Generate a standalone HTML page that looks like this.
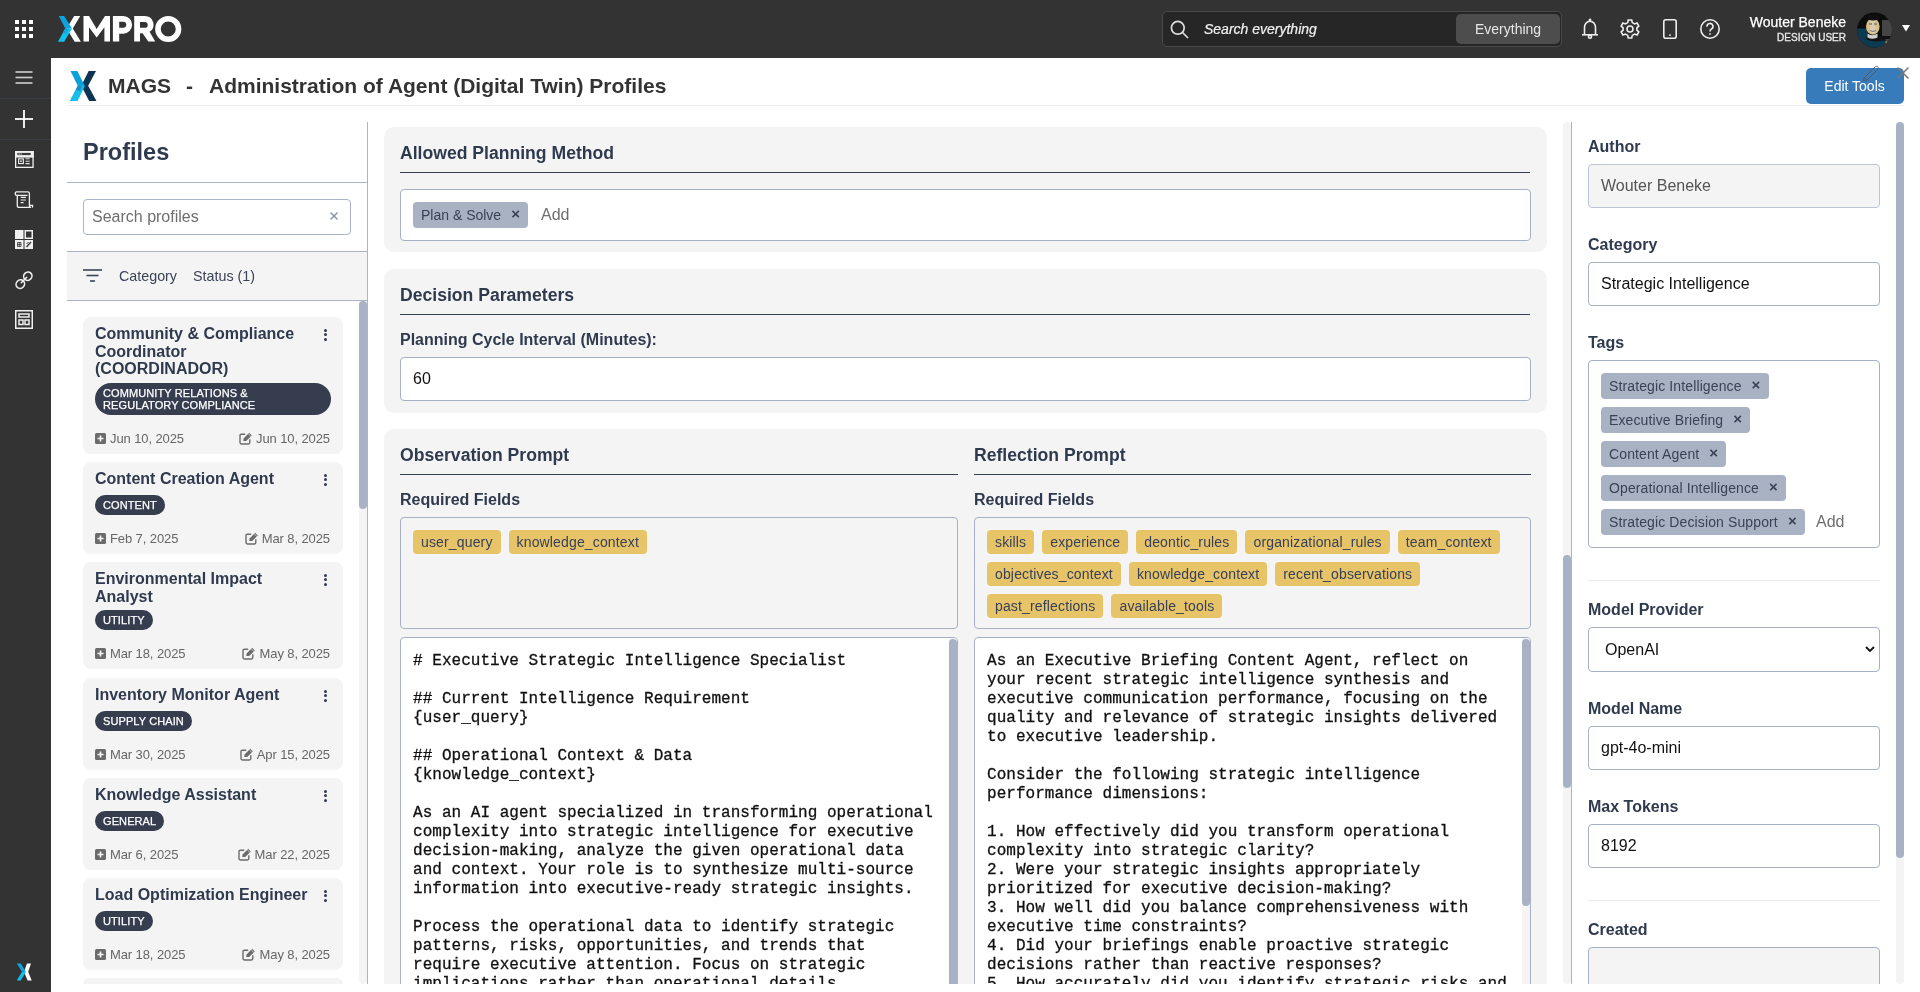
<!DOCTYPE html>
<html><head><meta charset="utf-8"><style>
*{box-sizing:border-box;margin:0;padding:0}
html,body{width:1920px;height:992px;overflow:hidden;background:#fff;-webkit-font-smoothing:antialiased;font-family:"Liberation Sans",sans-serif;color:#333}
.abs{position:absolute}
#top{position:absolute;left:0;top:0;width:1920px;height:58px;background:#333}
#side{position:absolute;left:0;top:58px;width:51px;height:934px;background:#333}
.sb-sep{position:absolute;left:0;width:51px;height:1px;background:#383c45}
#hdr-line{position:absolute;left:67px;top:105px;width:1836px;height:1px;background:#ececec}
.t{position:absolute;white-space:nowrap}
#root{position:absolute;left:0;top:0;width:1920px;height:992px;will-change:transform;background:#fff}
.card{position:absolute;left:83px;width:260px;background:#f4f4f4;border-radius:8px}
.ctitle{position:absolute;left:12px;font-size:16px;font-weight:bold;color:#2f3a4e;line-height:17.6px;white-space:nowrap}
.badge{position:absolute;left:12px;background:#363d4f;color:#fff;font-size:11px;letter-spacing:0.1px;-webkit-text-stroke:0.25px #fff;line-height:12px;border-radius:10px;padding:4px 8px;white-space:nowrap}
.date{position:absolute;font-size:13px;color:#666;line-height:14px;white-space:nowrap;letter-spacing:-0.1px}
.kebab{position:absolute;left:241px;width:4px}
.kebab i{display:block;width:3px;height:3px;border-radius:50%;background:#2f3a4e;margin-bottom:1.2px}
.sec{position:absolute;left:384px;width:1163px;background:#f4f4f4;border-radius:10px}
.h3{position:absolute;font-size:17.6px;font-weight:bold;color:#2f3a4e;line-height:20px;white-space:nowrap}
.uline{position:absolute;height:1.4px;background:#364052}
.lbl{position:absolute;font-size:16px;font-weight:bold;color:#2f3a4e;line-height:18px;white-space:nowrap}
.inp{position:absolute;background:#fff;border:1px solid #a7b1c6;border-radius:4px}
.chip{position:absolute;background:#a9b2c3;color:#3a4356;font-size:14px;line-height:16px;border-radius:4px;white-space:nowrap;height:26px;padding:5px 8px}
.ychip{display:inline-block;background:#e8c468;color:#36405a;font-size:14px;letter-spacing:0.15px;line-height:16px;border-radius:4px;white-space:nowrap;height:24px;padding:4px 8px;margin:0 8px 8px 0;vertical-align:top}
.mono{position:absolute;font-family:"Liberation Mono",monospace;font-size:16px;line-height:19px;color:#111;white-space:pre;letter-spacing:0.025px;-webkit-text-stroke:0.3px #111}
.rl{position:absolute;left:1588px;font-size:16px;font-weight:bold;color:#2f3a4e;line-height:18px;white-space:nowrap}
.ri{position:absolute;left:1588px;width:292px;height:44px;background:#fff;border:1px solid #a7b1c6;border-radius:4px}
.rv{position:absolute;left:1601px;font-size:16px;color:#111;line-height:18px;white-space:nowrap}
.tchip{position:absolute;left:1601px;height:26px;background:#a9b2c3;color:#3a4356;font-size:14px;letter-spacing:0.12px;line-height:16px;border-radius:4px;white-space:nowrap;padding:5px 8px}
</style></head><body><div id="root"><!-- TOP BAR -->
<div id="top">
  <svg class="abs" style="left:15px;top:20px" width="18" height="18" viewBox="0 0 18 18" fill="#fff">
    <rect x="0" y="0" width="4" height="4"/><rect x="7" y="0" width="4" height="4"/><rect x="14" y="0" width="4" height="4"/>
    <rect x="0" y="7" width="4" height="4"/><rect x="7" y="7" width="4" height="4"/><rect x="14" y="7" width="4" height="4"/>
    <rect x="0" y="14" width="4" height="4"/><rect x="7" y="14" width="4" height="4"/><rect x="14" y="14" width="4" height="4"/>
  </svg>
  <!-- XMPRO logo -->
  <svg class="abs" style="left:55px;top:12px" width="130" height="34" viewBox="55 12 130 34">
    <polygon points="74.2,16.1 80.2,16.1 72.8,28.6 80.9,41.7 74.7,41.7 66.6,28.6" fill="#fff"/>
    <polygon points="58.8,16.1 64.1,16.1 72,28.6 65.3,28.6" fill="#0ea3dd"/>
    <polygon points="65.3,28.6 72,28.6 64.1,41.7 57.9,41.7" fill="#13c2ec"/>
    <polygon points="65.3,28.6 69.5,28.6 66.2,34 62.5,33" fill="#12a8df"/>
    <polygon points="83.5,41.4 83.5,16 89,16 96.7,28.9 105,16 110,16 110,41.4 104.4,41.4 104.4,27.2 96.7,37.6 89,27.2 89,41.4" fill="#fff"/>
    <path fill="#fff" fill-rule="evenodd" d="M112.9,41.4 V16 H123.25 A8.85,8.85 0 0 1 123.25,33.7 H119.2 V41.4 Z M119.2,21.8 H123.25 A3,3 0 0 1 123.25,27.8 H119.2 Z"/>
    <path fill="#fff" fill-rule="evenodd" d="M134.2,41.4 V16 H144.9 A8.6,8.6 0 0 1 149.6,31.8 L155.2,41.4 H148.3 L142.6,33.2 H140 V41.4 Z M140,22 H144.8 A2.9,2.9 0 0 1 144.8,27.8 H140 Z"/>
    <circle cx="168.25" cy="29" r="10.3" stroke="#fff" stroke-width="5.6" fill="none"/>
  </svg>
  <!-- search -->
  <div class="abs" style="left:1162px;top:11px;width:400px;height:36px;background:#262626;border:1px solid #4a4a4a;border-radius:5px"></div>
  <svg class="abs" style="left:1170px;top:20px" width="19" height="19" viewBox="0 0 19 19" fill="none" stroke="#ddd" stroke-width="1.7">
    <circle cx="7.8" cy="7.8" r="6.4"/><line x1="12.5" y1="12.5" x2="18" y2="18"/>
  </svg>
  <div class="t" style="left:1204px;top:20px;font-size:14px;font-style:italic;color:#f2f2f2;line-height:18px;-webkit-text-stroke:0.2px #f2f2f2">Search everything</div>
  <div class="abs" style="left:1456px;top:14px;width:104px;height:30px;background:#4d4d4d;border-radius:5px"></div>
  <div class="t" style="left:1475px;top:20px;font-size:14px;color:#e6e6e6;line-height:18px">Everything</div>
  <!-- icons -->
  <svg class="abs" style="left:1580px;top:18px" width="20" height="22" viewBox="0 0 20 22" fill="none" stroke="#eee" stroke-width="1.6">
    <path d="M4.5,16.5 V9.5 A5.5,6.3 0 0 1 15.5,9.5 V16.5"/><line x1="2" y1="16.8" x2="18" y2="16.8"/><circle cx="10" cy="18.8" r="1.5"/><circle cx="10" cy="2" r="0.6"/>
  </svg>
  <svg class="abs" style="left:1620px;top:19px" width="20" height="20" viewBox="0 0 20 20" fill="none" stroke="#eee" stroke-width="1.6">
    <path d="M8.3,1 H11.7 L12.3,3.6 L14.6,4.9 L17.1,4 L18.8,7 L16.9,8.8 V11.2 L18.8,13 L17.1,16 L14.6,15.1 L12.3,16.4 L11.7,19 H8.3 L7.7,16.4 L5.4,15.1 L2.9,16 L1.2,13 L3.1,11.2 V8.8 L1.2,7 L2.9,4 L5.4,4.9 L7.7,3.6 Z"/>
    <circle cx="10" cy="10" r="3"/>
  </svg>
  <svg class="abs" style="left:1663px;top:19px" width="14" height="20" viewBox="0 0 14 20" fill="none" stroke="#eee" stroke-width="1.6">
    <rect x="0.8" y="0.8" width="12.4" height="18.4" rx="2"/><line x1="6" y1="16.2" x2="8" y2="16.2" stroke-width="1.2"/>
  </svg>
  <svg class="abs" style="left:1700px;top:19px" width="20" height="20" viewBox="0 0 20 20" fill="none" stroke="#eee" stroke-width="1.6">
    <circle cx="10" cy="10" r="9.2"/><path d="M7,7.6 A3,3 0 1 1 11.2,10.2 C10.3,10.7 10,11.2 10,12.5"/><line x1="10" y1="14.2" x2="10" y2="15.8"/>
  </svg>
  <div class="t" style="right:74px;top:14px;font-size:14px;color:#fff;line-height:16px;text-align:right;-webkit-text-stroke:0.25px #fff">Wouter Beneke</div>
  <div class="t" style="right:74px;top:32px;font-size:10px;font-weight:normal;color:#e6e6e6;-webkit-text-stroke:0.35px #e6e6e6;line-height:12px;text-align:right">DESIGN USER</div>
  <!-- avatar -->
  <svg class="abs" style="left:1856px;top:12px" width="37" height="36" viewBox="0 0 37 36">
    <defs><clipPath id="av"><circle cx="18.5" cy="18" r="17.5"/></clipPath></defs>
    <g clip-path="url(#av)">
      <rect width="37" height="36" fill="#0c0c0c"/>
      <rect x="26" y="8" width="11" height="28" fill="#454545"/>
      <path d="M0,16.5 H11 L12,25 L27,25 L29,27 L33,33 V36 H0 Z" fill="#0b3a51"/>
      <path d="M10,25 L27,24.5 L30,28.5 L19,29.5 L11,28 Z" fill="#141414"/>
      <path d="M11.5,21.5 Q16,25 21.5,21.5 L21.5,25.5 Q16,28 11.5,25.5 Z" fill="#cfcfcf"/>
      <ellipse cx="16.8" cy="14.5" rx="6.8" ry="8.3" fill="#dcbf7e"/>
      <path d="M14,8 Q17,6 19,9 L20,20 Q17,23 14,20 Z" fill="#d6d6d6" opacity="0.6"/>
      <path d="M13,12 H16 M18,12 H21" stroke="#555" stroke-width="1"/>
      <path d="M14,18.5 Q17,20.5 20,18.5" stroke="#777" stroke-width="1" fill="none"/>
      <ellipse cx="17" cy="5.8" rx="6.5" ry="2.8" fill="#111"/>
      <rect x="25.5" y="24" width="9" height="3" fill="#111"/>
      <rect x="29.5" y="29.5" width="2" height="2" fill="#c9a860"/>
    </g>
  </svg>
  <svg class="abs" style="left:1902px;top:25px" width="8" height="7" viewBox="0 0 8 7"><polygon points="0,0 8,0 4,6.5" fill="#fff"/></svg>
</div>
<!-- SIDEBAR -->
<div id="side">
  <svg class="abs" style="left:15px;top:13px" width="18" height="13" viewBox="0 0 18 13" stroke="#cfcfcf" stroke-width="1.6">
    <line x1="0.5" y1="1" x2="17.5" y2="1"/><line x1="0.5" y1="6.5" x2="17.5" y2="6.5"/><line x1="0.5" y1="12" x2="17.5" y2="12"/>
  </svg>
  <div class="sb-sep" style="top:40px"></div>
  <svg class="abs" style="left:15px;top:52px" width="18" height="18" viewBox="0 0 18 18" stroke="#fff" stroke-width="1.8">
    <line x1="9" y1="0" x2="9" y2="18"/><line x1="0" y1="9" x2="18" y2="9"/>
  </svg>
  <div class="sb-sep" style="top:81px"></div>
  <!-- icon1: window -->
  <svg class="abs" style="left:14px;top:93px" width="20" height="18" viewBox="0 0 20 18">
    <rect x="1.65" y="0.65" width="17.4" height="15.7" fill="none" stroke="#f0f0f0" stroke-width="1.3"/>
    <rect x="1" y="0" width="18.7" height="6.6" fill="#f0f0f0"/>
    <rect x="3.2" y="1.9" width="13.5" height="2.2" fill="#3a3a3a"/>
    <rect x="3.6" y="2.4" width="1" height="1.2" fill="#ccc"/><rect x="5.2" y="2.4" width="1" height="1.2" fill="#ccc"/><rect x="6.8" y="2.4" width="1" height="1.2" fill="#ccc"/>
    <rect x="4.1" y="7.3" width="5.8" height="5.8" fill="#f0f0f0"/>
    <rect x="5.2" y="8.4" width="3.6" height="3.6" fill="#333"/>
    <circle cx="7" cy="10.2" r="0.9" fill="#f0f0f0"/>
    <path d="M11.5,7.7 H15.7 M11.5,10.2 H15.7 M11.5,12.6 H15.7" stroke="#e0e0e0" stroke-width="1.1"/>
  </svg>
  <!-- icon2: scroll -->
  <svg class="abs" style="left:14px;top:133px" width="20" height="18" viewBox="0 0 20 18" fill="none" stroke="#f0f0f0" stroke-width="1.3">
    <path d="M2.6,4.4 Q1.3,4.4 1.3,2.4 Q1.3,0.9 2.6,0.9 H13.8 Q15.4,0.9 15.4,2.6 V14.8 Q15.4,16.4 17,16.4 H5 Q3.3,16.4 3.3,14.8 V4.4 Z"/>
    <path d="M3.3,4.4 H13.5 M15.4,14.4 H18.6 V15.6 Q18.6,16.4 17.8,16.4" />
    <path d="M6.7,6.4 H11.9 M6.7,9 H11.9 M6.7,11.6 H9.6" stroke-width="1.1"/>
  </svg>
  <!-- icon3: grid -->
  <svg class="abs" style="left:15px;top:172px" width="18" height="19" viewBox="0 0 18 19">
    <rect x="0" y="0" width="8.5" height="9" fill="#f0f0f0"/>
    <rect x="10.25" y="0.75" width="7" height="7.5" fill="none" stroke="#f0f0f0" stroke-width="1.5"/>
    <rect x="0" y="10" width="8.5" height="9" fill="#f0f0f0"/>
    <rect x="9.5" y="10" width="8.5" height="9" fill="#f0f0f0"/>
    <path d="M2.5,12.5 H6 V16.5 H2.5 Z M4.25,12.5 V16.5 M2.5,14.5 H6" stroke="#333" stroke-width="0.8" fill="none"/>
    <line x1="11.5" y1="17" x2="16" y2="12" stroke="#333" stroke-width="1.2"/>
    <line x1="11.5" y1="14" x2="13.5" y2="12" stroke="#333" stroke-width="1"/>
  </svg>
  <!-- icon4: link -->
  <svg class="abs" style="left:15px;top:212px" width="18" height="20" viewBox="0 0 18 20" fill="none" stroke="#f0f0f0" stroke-width="1.6">
    <ellipse cx="12.8" cy="6.2" rx="4.3" ry="4.0" transform="rotate(-45 12.8 6.2)"/>
    <ellipse cx="5.3" cy="14.1" rx="4.4" ry="4.1" transform="rotate(-45 5.3 14.1)"/>
    <line x1="6.3" y1="12.7" x2="11.7" y2="7.3" stroke-linecap="round"/>
  </svg>
  <!-- icon5 -->
  <svg class="abs" style="left:15px;top:252px" width="18" height="19" viewBox="0 0 18 19" fill="none" stroke="#f0f0f0" stroke-width="1.5">
    <rect x="0.75" y="0.75" width="16.5" height="17.5"/>
    <rect x="4" y="4" width="10" height="3"/><rect x="4" y="10" width="4" height="4.5"/><rect x="10" y="10" width="4" height="4.5"/>
  </svg>
  <!-- bottom X -->
  <svg class="abs" style="left:16px;top:905px" width="17" height="18" viewBox="0 0 17 18">
    <polygon points="11,0.5 15,0.5 12.2,8.8 15.7,17.4 11.6,17.4 8,8.8" fill="#fff"/>
    <polygon points="0.8,0.5 4.7,0.5 10,8.8 6,8.8" fill="#10a5de"/>
    <polygon points="6,8.8 10,8.8 4.7,17.4 0.8,17.4" fill="#14c0ea"/>
  </svg>
</div>
<!-- HEADER -->
<svg class="abs" style="left:70px;top:71px" width="26.5" height="30" viewBox="0.5 0.5 27 31" preserveAspectRatio="none">
  <polygon points="19.5,0.5 27,0.5 19,15.8 27.5,31.5 20,31.5 12,15.8" fill="#0b3550"/>
  <polygon points="1,0.5 8,0.5 15.5,15.8 8,31.5 0.5,31.5 8.4,15.8" fill="#0aa1db"/>
  <polygon points="8.4,15.8 15.5,15.8 8,31.5 0.5,31.5" fill="#17c0ea"/>
  <polygon points="8.4,15.8 13,15.8 10.5,21.5 6.5,19.8" fill="#1a8fc8"/>
</svg>
<div class="t" style="left:108px;top:73.5px;font-size:21px;font-weight:bold;color:#333;line-height:24px">MAGS</div>
<div class="t" style="left:186px;top:73.5px;font-size:21px;font-weight:bold;color:#333;line-height:24px">-</div>
<div class="t" style="left:209px;top:73.5px;font-size:21px;font-weight:bold;color:#333;line-height:24px">Administration of Agent (Digital Twin) Profiles</div>
<div class="abs" style="left:1806px;top:68px;width:98px;height:36px;background:#377bbb;border-radius:5px"></div>
<div class="t" style="left:1824.3px;top:77px;font-size:14px;color:#fff;line-height:18px">Edit Tools</div>
<svg class="abs" style="left:1860px;top:63px" width="52" height="20" viewBox="0 0 52 20" fill="none">
  <path d="M4,15 L15.5,3.5 A1.8,1.8 0 0 1 18,6 L6.5,17.5 L3.6,18.1 Z M4.6,14.6 L6.9,16.9" stroke="#555" stroke-width="1" opacity="0.85"/>
  <path d="M37.5,4.5 L48.5,15.5 M48.5,4.5 L37.5,15.5" stroke="#777" stroke-width="1.5"/>
</svg>
<div id="hdr-line"></div>
<div class="t" style="left:83px;top:139px;font-size:23.5px;font-weight:bold;color:#2f3a4e;line-height:27px">Profiles</div><div class="abs" style="left:67px;top:182px;width:300px;height:1px;background:#a9b4c8"></div><div class="abs" style="left:83px;top:199px;width:268px;height:36px;border:1px solid #a9b4c8;border-radius:4px;background:#fff"></div><div class="t" style="left:92px;top:208px;font-size:16px;color:#6e6e6e;line-height:18px">Search profiles</div><svg class="abs" style="left:330px;top:212px" width="8" height="8" viewBox="0 0 8 8" stroke="#8a94a6" stroke-width="1.4"><line x1="0.5" y1="0.5" x2="7.5" y2="7.5"/><line x1="7.5" y1="0.5" x2="0.5" y2="7.5"/></svg><div class="abs" style="left:67px;top:251px;width:300px;height:50px;background:#f4f4f4;border-top:1px solid #a9b4c8;border-bottom:1px solid #a9b4c8"></div><svg class="abs" style="left:83px;top:269px" width="20" height="13" viewBox="0 0 20 13" stroke="#3a4356" stroke-width="1.6"><line x1="0" y1="1" x2="19" y2="1"/><line x1="3.5" y1="6.5" x2="15.5" y2="6.5"/><line x1="7" y1="12" x2="12" y2="12"/></svg><div class="t" style="left:119px;top:267.5px;font-size:14.3px;color:#3a4356;line-height:17px">Category</div><div class="t" style="left:193px;top:267.5px;font-size:14.3px;color:#3a4356;line-height:17px">Status (1)</div><div class="abs" style="left:359px;top:301px;width:8px;height:683px;background:#f4f4f4;border-radius:0 0 4px 4px"></div><div class="abs" style="left:359px;top:301px;width:8px;height:208px;background:#a8b2c4;border-radius:4px"></div><div class="abs" style="left:367px;top:122px;width:1px;height:862px;background:#a9b4c8"></div><div class="card" style="top:317px;height:137px"><div class="ctitle" style="top:8px">Community &amp; Compliance<br>Coordinator<br>(COORDINADOR)</div><div class="kebab" style="top:12.3px"><i></i><i></i><i></i></div><div class="badge" style="top:66.2px;width:236px;border-radius:16px;">COMMUNITY RELATIONS &amp;<br>REGULATORY COMPLIANCE</div><svg class="abs" style="left:12px;top:116px" width="11" height="11" viewBox="0 0 11 11"><rect width="11" height="11" rx="1.5" fill="#6b6b6b"/><path d="M5.5,2.5 V8.5 M2.5,5.5 H8.5" stroke="#f4f4f4" stroke-width="1.6"/></svg><div class="date" style="left:27px;top:114.5px">Jun 10, 2025</div><div class="date" style="right:13px;top:114.5px">Jun 10, 2025</div><svg class="abs" style="left:155.9px;top:115px" width="14" height="13" viewBox="0 0 14 13" fill="none"><path d="M6.2,2.2 H2.4 Q1,2.2 1,3.6 V10.6 Q1,12 2.4,12 H9.4 Q10.8,12 10.8,10.6 V7.2" stroke="#6b6b6b" stroke-width="1.4"/><path d="M4.2,9 L4.6,6.4 L10.2,0.8 L12.8,3.4 L7.2,9 Z" fill="#6b6b6b"/><path d="M9.2,1.8 L11.8,4.4" stroke="#f4f4f4" stroke-width="0.7"/></svg></div><div class="card" style="top:462px;height:92px"><div class="ctitle" style="top:8px">Content Creation Agent</div><div class="kebab" style="top:12.3px"><i></i><i></i><i></i></div><div class="badge" style="top:33.0px;">CONTENT</div><svg class="abs" style="left:12px;top:71px" width="11" height="11" viewBox="0 0 11 11"><rect width="11" height="11" rx="1.5" fill="#6b6b6b"/><path d="M5.5,2.5 V8.5 M2.5,5.5 H8.5" stroke="#f4f4f4" stroke-width="1.6"/></svg><div class="date" style="left:27px;top:69.5px">Feb 7, 2025</div><div class="date" style="right:13px;top:69.5px">Mar 8, 2025</div><svg class="abs" style="left:161.6px;top:70px" width="14" height="13" viewBox="0 0 14 13" fill="none"><path d="M6.2,2.2 H2.4 Q1,2.2 1,3.6 V10.6 Q1,12 2.4,12 H9.4 Q10.8,12 10.8,10.6 V7.2" stroke="#6b6b6b" stroke-width="1.4"/><path d="M4.2,9 L4.6,6.4 L10.2,0.8 L12.8,3.4 L7.2,9 Z" fill="#6b6b6b"/><path d="M9.2,1.8 L11.8,4.4" stroke="#f4f4f4" stroke-width="0.7"/></svg></div><div class="card" style="top:562px;height:107px"><div class="ctitle" style="top:8px">Environmental Impact<br>Analyst</div><div class="kebab" style="top:12.3px"><i></i><i></i><i></i></div><div class="badge" style="top:48px;">UTILITY</div><svg class="abs" style="left:12px;top:86px" width="11" height="11" viewBox="0 0 11 11"><rect width="11" height="11" rx="1.5" fill="#6b6b6b"/><path d="M5.5,2.5 V8.5 M2.5,5.5 H8.5" stroke="#f4f4f4" stroke-width="1.6"/></svg><div class="date" style="left:27px;top:84.5px">Mar 18, 2025</div><div class="date" style="right:13px;top:84.5px">May 8, 2025</div><svg class="abs" style="left:159.4px;top:85px" width="14" height="13" viewBox="0 0 14 13" fill="none"><path d="M6.2,2.2 H2.4 Q1,2.2 1,3.6 V10.6 Q1,12 2.4,12 H9.4 Q10.8,12 10.8,10.6 V7.2" stroke="#6b6b6b" stroke-width="1.4"/><path d="M4.2,9 L4.6,6.4 L10.2,0.8 L12.8,3.4 L7.2,9 Z" fill="#6b6b6b"/><path d="M9.2,1.8 L11.8,4.4" stroke="#f4f4f4" stroke-width="0.7"/></svg></div><div class="card" style="top:678px;height:92px"><div class="ctitle" style="top:8px">Inventory Monitor Agent</div><div class="kebab" style="top:12.3px"><i></i><i></i><i></i></div><div class="badge" style="top:33.0px;">SUPPLY CHAIN</div><svg class="abs" style="left:12px;top:71px" width="11" height="11" viewBox="0 0 11 11"><rect width="11" height="11" rx="1.5" fill="#6b6b6b"/><path d="M5.5,2.5 V8.5 M2.5,5.5 H8.5" stroke="#f4f4f4" stroke-width="1.6"/></svg><div class="date" style="left:27px;top:69.5px">Mar 30, 2025</div><div class="date" style="right:13px;top:69.5px">Apr 15, 2025</div><svg class="abs" style="left:156.6px;top:70px" width="14" height="13" viewBox="0 0 14 13" fill="none"><path d="M6.2,2.2 H2.4 Q1,2.2 1,3.6 V10.6 Q1,12 2.4,12 H9.4 Q10.8,12 10.8,10.6 V7.2" stroke="#6b6b6b" stroke-width="1.4"/><path d="M4.2,9 L4.6,6.4 L10.2,0.8 L12.8,3.4 L7.2,9 Z" fill="#6b6b6b"/><path d="M9.2,1.8 L11.8,4.4" stroke="#f4f4f4" stroke-width="0.7"/></svg></div><div class="card" style="top:778px;height:92px"><div class="ctitle" style="top:8px">Knowledge Assistant</div><div class="kebab" style="top:12.3px"><i></i><i></i><i></i></div><div class="badge" style="top:33.0px;">GENERAL</div><svg class="abs" style="left:12px;top:71px" width="11" height="11" viewBox="0 0 11 11"><rect width="11" height="11" rx="1.5" fill="#6b6b6b"/><path d="M5.5,2.5 V8.5 M2.5,5.5 H8.5" stroke="#f4f4f4" stroke-width="1.6"/></svg><div class="date" style="left:27px;top:69.5px">Mar 6, 2025</div><div class="date" style="right:13px;top:69.5px">Mar 22, 2025</div><svg class="abs" style="left:154.5px;top:70px" width="14" height="13" viewBox="0 0 14 13" fill="none"><path d="M6.2,2.2 H2.4 Q1,2.2 1,3.6 V10.6 Q1,12 2.4,12 H9.4 Q10.8,12 10.8,10.6 V7.2" stroke="#6b6b6b" stroke-width="1.4"/><path d="M4.2,9 L4.6,6.4 L10.2,0.8 L12.8,3.4 L7.2,9 Z" fill="#6b6b6b"/><path d="M9.2,1.8 L11.8,4.4" stroke="#f4f4f4" stroke-width="0.7"/></svg></div><div class="card" style="top:878px;height:92px"><div class="ctitle" style="top:8px">Load Optimization Engineer</div><div class="kebab" style="top:12.3px"><i></i><i></i><i></i></div><div class="badge" style="top:33.0px;">UTILITY</div><svg class="abs" style="left:12px;top:71px" width="11" height="11" viewBox="0 0 11 11"><rect width="11" height="11" rx="1.5" fill="#6b6b6b"/><path d="M5.5,2.5 V8.5 M2.5,5.5 H8.5" stroke="#f4f4f4" stroke-width="1.6"/></svg><div class="date" style="left:27px;top:69.5px">Mar 18, 2025</div><div class="date" style="right:13px;top:69.5px">May 8, 2025</div><svg class="abs" style="left:159.4px;top:70px" width="14" height="13" viewBox="0 0 14 13" fill="none"><path d="M6.2,2.2 H2.4 Q1,2.2 1,3.6 V10.6 Q1,12 2.4,12 H9.4 Q10.8,12 10.8,10.6 V7.2" stroke="#6b6b6b" stroke-width="1.4"/><path d="M4.2,9 L4.6,6.4 L10.2,0.8 L12.8,3.4 L7.2,9 Z" fill="#6b6b6b"/><path d="M9.2,1.8 L11.8,4.4" stroke="#f4f4f4" stroke-width="0.7"/></svg></div><div class="card" style="top:978px;height:6px;border-radius:8px 8px 0 0"></div><div class="abs" style="left:1563px;top:122px;width:8px;height:862px;background:#f4f4f4;border-radius:4px"></div><div class="abs" style="left:1563px;top:555px;width:8px;height:233px;background:#a8b2c4;border-radius:4px"></div><div class="abs" style="left:1571px;top:122px;width:1px;height:862px;background:#a9b4c8"></div><div class="sec" style="top:127px;height:125px"></div><div class="h3" style="left:400px;top:143px">Allowed Planning Method</div><div class="uline" style="left:400px;top:171.8px;width:1130px"></div><div class="inp" style="left:400px;top:189px;width:1131px;height:52px"></div><div class="chip" style="left:413px;top:202px">Plan &amp; Solve<span style="display:inline-block;margin-left:10px;font-size:15px;font-weight:bold;position:relative;top:-1px">&#215;</span></div><div class="t" style="left:541px;top:206px;font-size:16px;color:#6e6e6e;line-height:18px">Add</div><div class="sec" style="top:269px;height:144px"></div><div class="h3" style="left:400px;top:285px">Decision Parameters</div><div class="uline" style="left:400px;top:313.8px;width:1130px"></div><div class="lbl" style="left:400px;top:331px">Planning Cycle Interval (Minutes):</div><div class="inp" style="left:400px;top:357px;width:1131px;height:44px"></div><div class="t" style="left:413px;top:370px;font-size:16px;color:#111;line-height:18px">60</div><div class="sec" style="top:429px;height:560px;border-radius:10px 10px 0 0"></div><div class="h3" style="left:400px;top:445px">Observation Prompt</div><div class="uline" style="left:400px;top:473.8px;width:558px"></div><div class="h3" style="left:974px;top:445px">Reflection Prompt</div><div class="uline" style="left:974px;top:473.8px;width:557px"></div><div class="lbl" style="left:400px;top:491px">Required Fields</div><div class="lbl" style="left:974px;top:491px">Required Fields</div><div class="inp" style="left:400px;top:517px;width:558px;height:112px;background:#f4f4f4;padding:12px 0 0 12px"><span class="ychip">user_query</span><span class="ychip">knowledge_context</span></div><div class="inp" style="left:974px;top:517px;width:557px;height:112px;background:#f4f4f4;padding:12px 0 0 12px"><span class="ychip">skills</span><span class="ychip">experience</span><span class="ychip">deontic_rules</span><span class="ychip">organizational_rules</span><span class="ychip">team_context</span><span class="ychip">objectives_context</span><span class="ychip">knowledge_context</span><span class="ychip">recent_observations</span><span class="ychip">past_reflections</span><span class="ychip">available_tools</span></div><div class="inp" style="left:400px;top:637px;width:558px;height:360px;overflow:hidden"><div class="mono" style="left:12px;top:13.5px"># Executive Strategic Intelligence Specialist

## Current Intelligence Requirement
{user_query}

## Operational Context &amp; Data
{knowledge_context}

As an AI agent specialized in transforming operational
complexity into strategic intelligence for executive
decision-making, analyze the given operational data
and context. Your role is to synthesize multi-source
information into executive-ready strategic insights.

Process the operational data to identify strategic
patterns, risks, opportunities, and trends that
require executive attention. Focus on strategic
implications rather than operational details.</div><div class="abs" style="left:548px;top:0px;width:8px;height:360px;background:#f4f4f4"></div><div class="abs" style="left:548px;top:1px;width:8px;height:400px;background:#a8b2c4;border-radius:4px"></div></div><div class="inp" style="left:974px;top:637px;width:557px;height:360px;overflow:hidden"><div class="mono" style="left:12px;top:13.5px">As an Executive Briefing Content Agent, reflect on
your recent strategic intelligence synthesis and
executive communication performance, focusing on the
quality and relevance of strategic insights delivered
to executive leadership.

Consider the following strategic intelligence
performance dimensions:

1. How effectively did you transform operational
complexity into strategic clarity?
2. Were your strategic insights appropriately
prioritized for executive decision-making?
3. How well did you balance comprehensiveness with
executive time constraints?
4. Did your briefings enable proactive strategic
decisions rather than reactive responses?
5. How accurately did you identify strategic risks and</div><div class="abs" style="left:547px;top:0px;width:8px;height:360px;background:#f4f4f4"></div><div class="abs" style="left:547px;top:1px;width:8px;height:267px;background:#a8b2c4;border-radius:4px"></div></div><div class="abs" style="left:1896px;top:122px;width:8px;height:862px;background:#f4f4f4;border-radius:4px"></div><div class="abs" style="left:1896px;top:122px;width:8px;height:736px;background:#a8b2c4;border-radius:4px"></div><div class="rl" style="top:138px">Author</div><div class="ri" style="top:164px;background:#f4f4f4;border-color:#bcc4d2"></div><div class="rv" style="top:177px;color:#555">Wouter Beneke</div><div class="rl" style="top:236px">Category</div><div class="ri" style="top:262px"></div><div class="rv" style="top:275px">Strategic Intelligence</div><div class="rl" style="top:334px">Tags</div><div class="ri" style="top:360px;height:188px"></div><div class="tchip" style="top:373px">Strategic Intelligence<span style="display:inline-block;margin-left:10px;font-size:15px;font-weight:bold;position:relative;top:-1px">&#215;</span></div><div class="tchip" style="top:407px">Executive Briefing<span style="display:inline-block;margin-left:10px;font-size:15px;font-weight:bold;position:relative;top:-1px">&#215;</span></div><div class="tchip" style="top:441px">Content Agent<span style="display:inline-block;margin-left:10px;font-size:15px;font-weight:bold;position:relative;top:-1px">&#215;</span></div><div class="tchip" style="top:475px">Operational Intelligence<span style="display:inline-block;margin-left:10px;font-size:15px;font-weight:bold;position:relative;top:-1px">&#215;</span></div><div class="tchip" style="top:509px">Strategic Decision Support<span style="display:inline-block;margin-left:10px;font-size:15px;font-weight:bold;position:relative;top:-1px">&#215;</span></div><div class="t" style="left:1816px;top:513px;font-size:16px;color:#6e6e6e;line-height:18px">Add</div><div class="abs" style="left:1588px;top:580px;width:292px;height:1px;background:#ececec"></div><div class="rl" style="top:601px">Model Provider</div><div class="ri" style="top:627px;height:45px"></div><div class="rv" style="top:641px;left:1605px">OpenAI</div><svg class="abs" style="left:1865px;top:646px" width="10" height="7" viewBox="0 0 10 7" fill="none" stroke="#111" stroke-width="1.8"><path d="M1,1 L5,5 L9,1"/></svg><div class="rl" style="top:700px">Model Name</div><div class="ri" style="top:726px"></div><div class="rv" style="top:739px">gpt-4o-mini</div><div class="rl" style="top:798px">Max Tokens</div><div class="ri" style="top:824px"></div><div class="rv" style="top:837px">8192</div><div class="abs" style="left:1588px;top:900px;width:292px;height:1px;background:#ececec"></div><div class="rl" style="top:921px">Created</div><div class="ri" style="top:947px;background:#f4f4f4;height:60px"></div><div class="abs" style="left:51px;top:984px;width:1869px;height:8px;background:#fff"></div></div></body></html>
